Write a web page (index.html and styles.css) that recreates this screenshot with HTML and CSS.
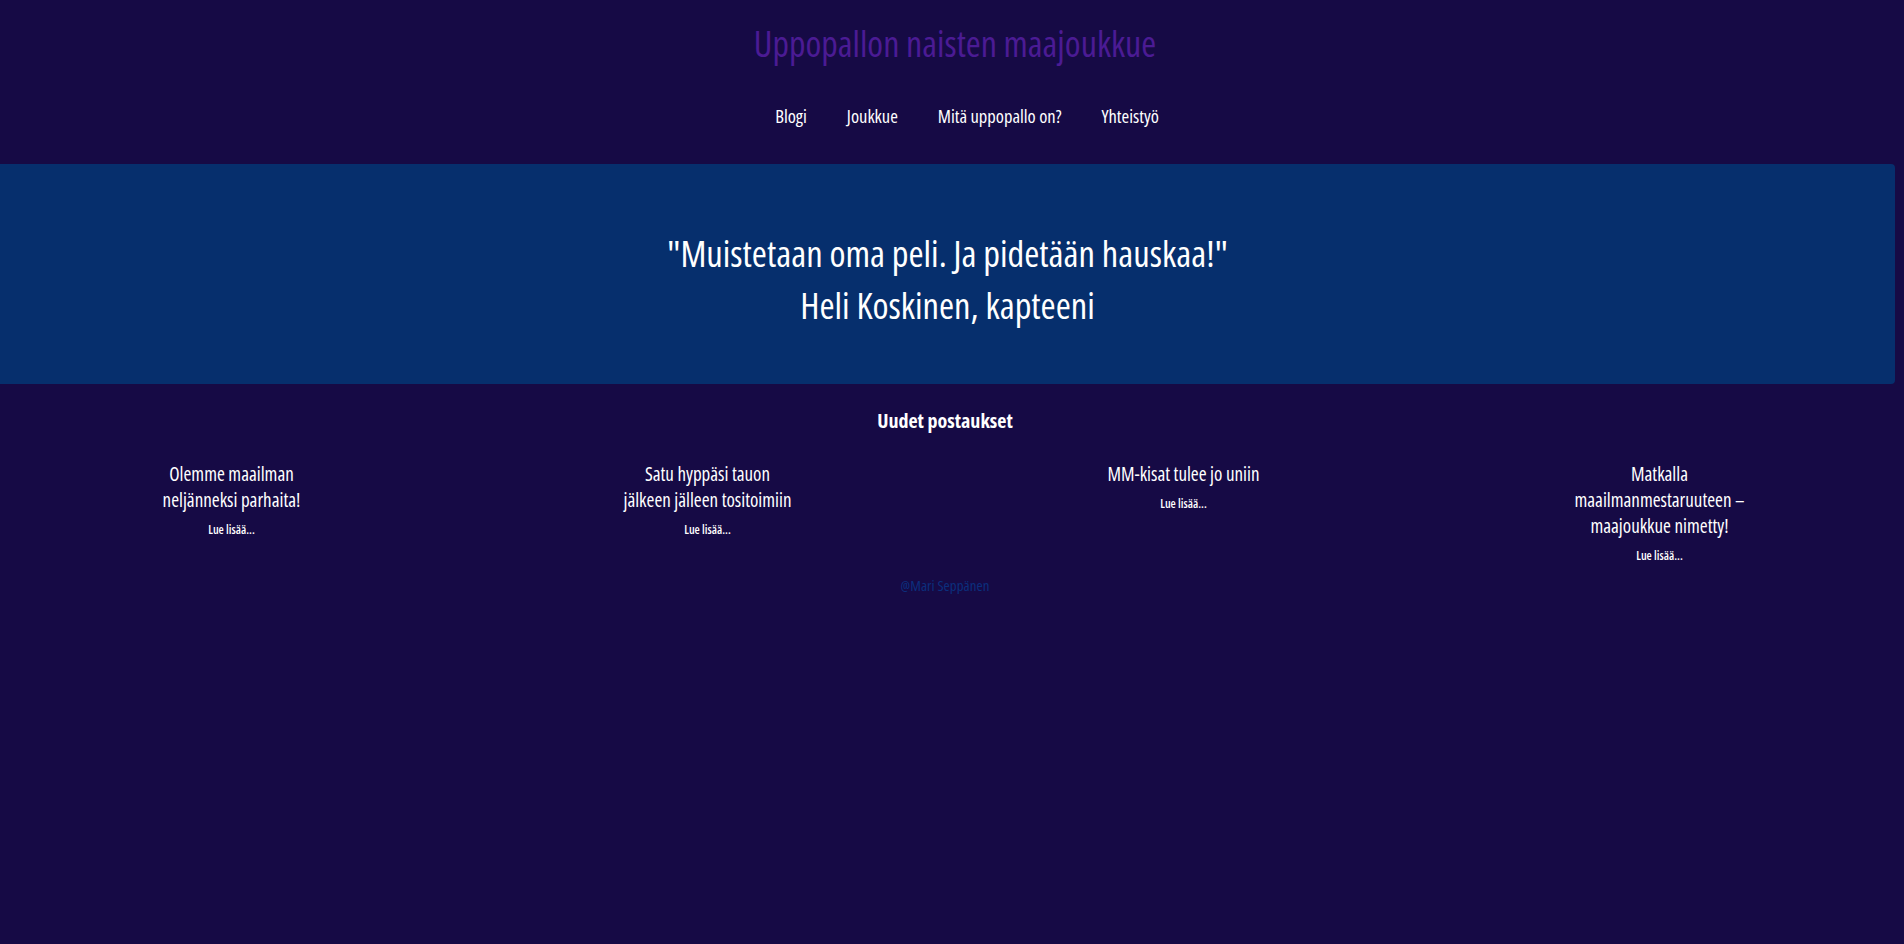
FILE: index.html
```html
<!DOCTYPE html>
<html lang="fi">
<head>
<meta charset="utf-8">
<title>Uppopallon naisten maajoukkue</title>
<link rel="stylesheet" href="styles.css">
</head>
<body>
<header class="site-header">
  <h1 class="site-title">Uppopallon naisten maajoukkue</h1>
  <nav class="main-nav">
    <ul class="nav-list">
      <li><a class="nav-link" href="#">Blogi</a></li>
      <li><a class="nav-link" href="#">Joukkue</a></li>
      <li><a class="nav-link" href="#">Mitä uppopallo on?</a></li>
      <li><a class="nav-link" href="#">Yhteistyö</a></li>
    </ul>
  </nav>
</header>
<section class="hero">
  <p class="hero-quote">"Muistetaan oma peli. Ja pidetään hauskaa!"</p>
  <p class="hero-quote">Heli Koskinen, kapteeni</p>
</section>
<main class="posts">
  <h2 class="posts-title">Uudet postaukset</h2>
  <div class="post-grid">
    <article class="post">
      <h3 class="post-title">Olemme maailman<br>neljänneksi parhaita!</h3>
      <a class="read-more" href="#">Lue lisää...</a>
    </article>
    <article class="post">
      <h3 class="post-title">Satu hyppäsi tauon<br>jälkeen jälleen tositoimiin</h3>
      <a class="read-more" href="#">Lue lisää...</a>
    </article>
    <article class="post">
      <h3 class="post-title">MM-kisat tulee jo uniin</h3>
      <a class="read-more" href="#">Lue lisää...</a>
    </article>
    <article class="post">
      <h3 class="post-title">Matkalla<br>maailmanmestaruuteen –<br>maajoukkue nimetty!</h3>
      <a class="read-more" href="#">Lue lisää...</a>
    </article>
  </div>
</main>
<footer class="site-footer">@Mari Seppänen</footer>
</body>
</html>
```
FILE: styles.css
```css
html, body {
  margin: 0;
  padding: 0;
}
body {
  background: #160a45;
  color: #ffffff;
  font-family: "Open Sans", "Roboto", sans-serif;
  font-stretch: 75%;
  font-weight: 500;
  min-height: 944px;
}
a {
  color: inherit;
  text-decoration: none;
}
.site-header {
  text-align: center;
}
.site-title {
  margin: 22px 0 0;
  font-size: 36px;
  line-height: 44px;
  font-weight: 400;
  color: #4b1b94;
  padding-left: 6px;
}
.main-nav {
  margin-top: 38px;
}
.nav-list {
  list-style: none;
  margin: 0;
  padding: 0 0 0 30px;
  display: flex;
  justify-content: center;
}
.nav-link {
  display: block;
  padding: 0 20px;
  font-size: 18.5px;
  line-height: 24px;
}
.hero {
  margin-top: 36px;
  width: 1895px;
  height: 220px;
  box-sizing: border-box;
  padding: 63px 0 53px;
  background: #062f6d;
  border-radius: 0 4px 4px 0;
  text-align: center;
}
.hero-quote {
  margin: 0;
  font-size: 36.5px;
  line-height: 52px;
  font-weight: 500;
}
.posts {
  text-align: center;
}
.posts-title {
  margin: 25px 0 0;
  padding-right: 14px;
  font-size: 20px;
  line-height: 24px;
  font-weight: 700;
}
.post-grid {
  margin-top: 28px;
  display: grid;
  grid-template-columns: repeat(4, 1fr);
}
.post {
  padding-right: 13px;
}
.post-title {
  margin: 0;
  font-size: 19px;
  line-height: 26px;
  font-weight: 500;
}
.read-more {
  display: block;
  margin-top: 10px;
  font-size: 12px;
  line-height: 14px;
  font-weight: 600;
}
.site-footer {
  margin-top: 14px;
  padding-right: 14px;
  text-align: center;
  font-size: 15px;
  line-height: 16px;
  color: #0b2f7d;
}
```
